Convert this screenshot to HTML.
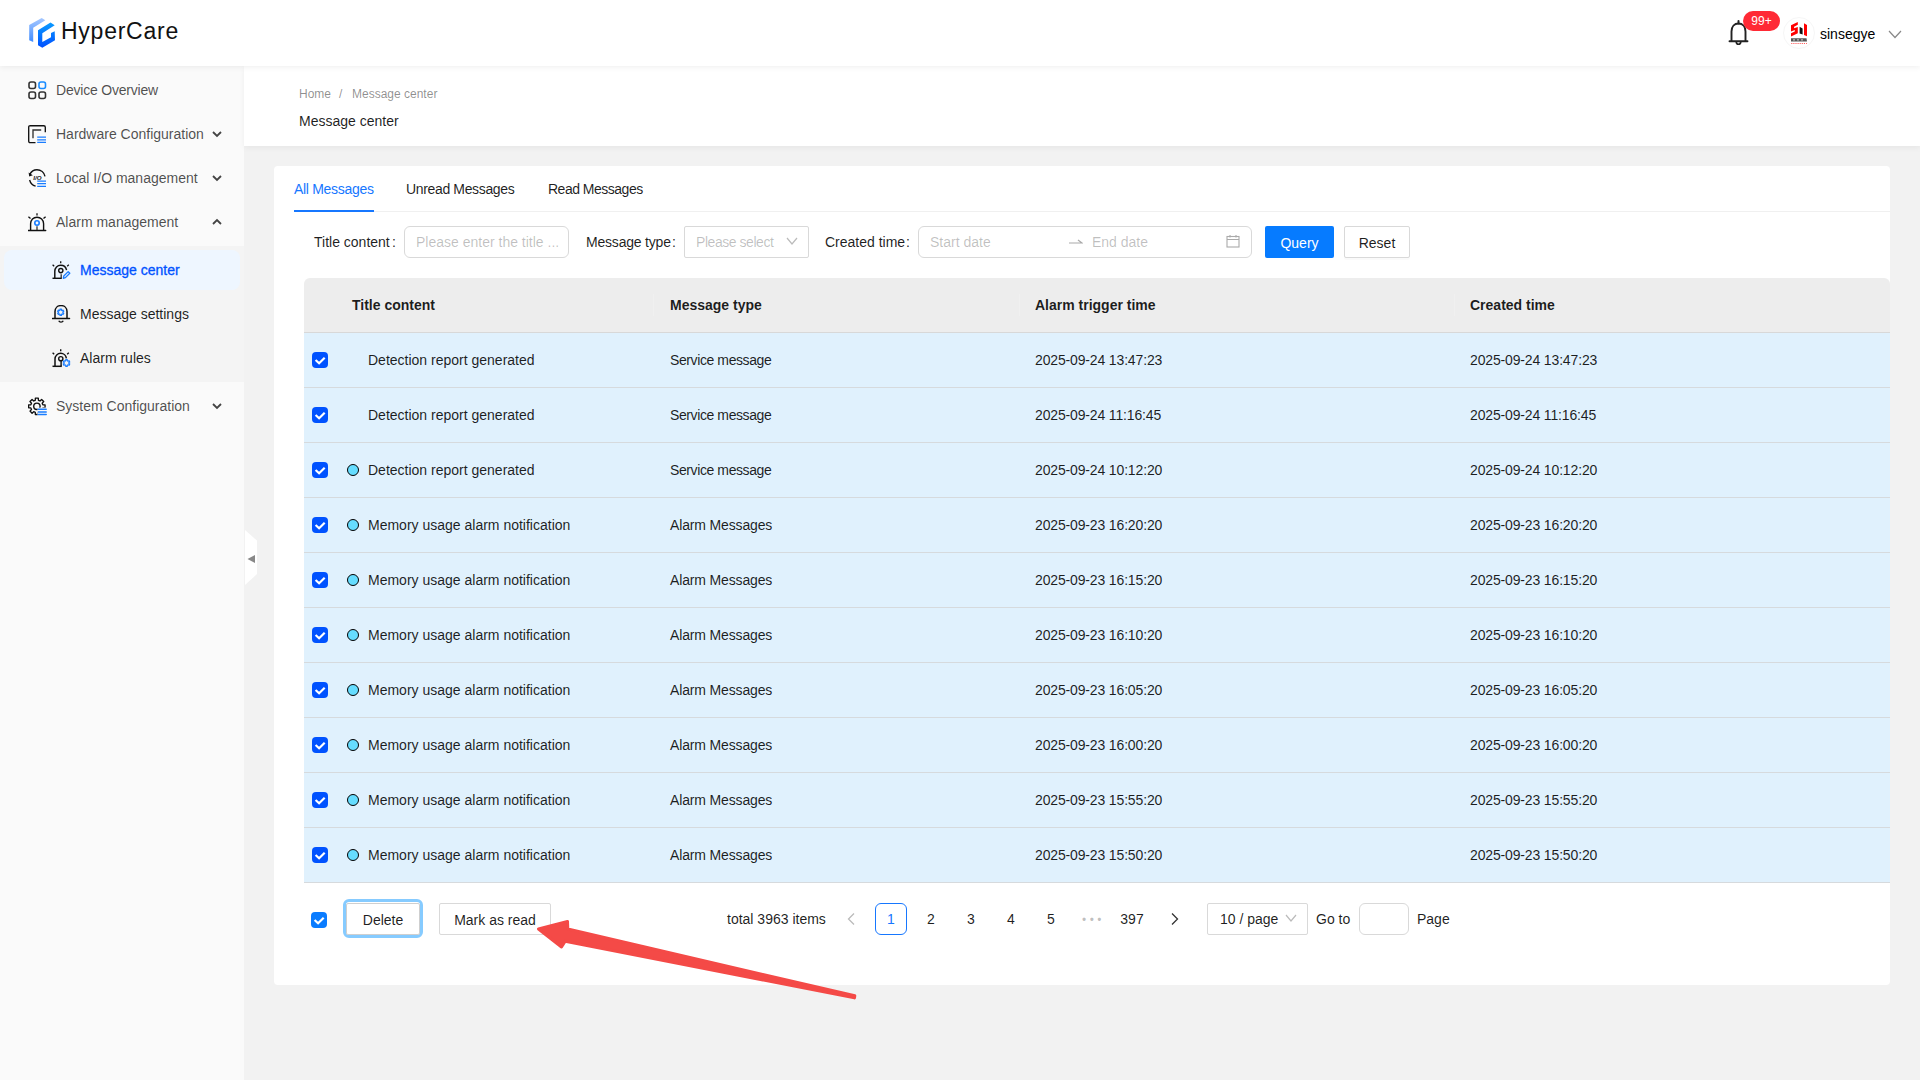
<!DOCTYPE html>
<html><head><meta charset="utf-8">
<style>
*{box-sizing:border-box;margin:0;padding:0}
html,body{width:1920px;height:1080px;overflow:hidden}
body{font-family:"Liberation Sans",sans-serif;font-size:14px;color:rgba(0,0,0,0.88);background:#f2f2f2;position:relative}
.abs{position:absolute}
.t{position:absolute;white-space:nowrap;line-height:22px;height:22px}
#hdr{left:0;top:0;width:1920px;height:66px;background:#fff;box-shadow:0 1px 6px rgba(0,0,0,0.07);z-index:5}
#side{left:0;top:66px;width:244px;height:1014px;background:#fafafa;z-index:1}
#sub{left:0;top:180px;width:244px;height:136px;background:#f4f4f4}
#selitem{left:4px;top:184px;width:236px;height:40px;background:#eef6ff;border-radius:8px}
.mi{color:rgba(0,0,0,0.7)}
.si{color:rgba(0,0,0,0.88)}
.chev{position:absolute;width:14px;height:14px}
#phdr{left:244px;top:66px;width:1676px;height:80px;background:#fff;box-shadow:0 2px 6px rgba(0,0,0,0.05);z-index:2}
#card{left:274px;top:166px;width:1616px;height:819px;background:#fff;border-radius:4px}
.inp{position:absolute;border:1px solid #d9d9d9;background:#fff}
.ph{color:rgba(0,0,0,0.25)}
#thead{left:30px;top:112px;width:1586px;height:55px;background:#ededed;border-radius:6px 6px 0 0;border-bottom:1px solid #d8d8d8}
.row{position:absolute;left:30px;width:1586px;height:55px;background:#e0f1fd;border-bottom:1px solid #d6dadd}
.cb{position:absolute;width:16px;height:16px;background:#0052ff;border-radius:4px}
.cb svg{position:absolute;left:0;top:0}
.dot{position:absolute;left:43px;top:21px;width:12px;height:12px;border-radius:50%;background:#66ddff;border:1px solid #000}
.sep{position:absolute;top:16px;width:1px;height:22px;background:#f0f0f0}
.pg{position:absolute;top:903px;height:32px;line-height:32px;text-align:center}
</style></head><body>

<!-- HEADER -->
<div id="hdr" class="abs">
  <svg class="abs" style="left:26px;top:14px" width="32" height="36" viewBox="0 0 32 36">
    <defs>
      <linearGradient id="lg1" x1="0" y1="0" x2="0" y2="1"><stop offset="0" stop-color="#a6c8ff"/><stop offset="1" stop-color="#3f8cff"/></linearGradient>
      <linearGradient id="lg2" x1="0" y1="0" x2="0" y2="1"><stop offset="0" stop-color="#0a9bff"/><stop offset="1" stop-color="#0050ff"/></linearGradient>
    </defs>
    <path d="M3.2 11 L15.7 4 L19.3 6.3 L7.2 13.7 L7.2 28 L3.2 26.3 Z" fill="url(#lg1)"/>
    <path d="M12 16.3 L24.5 8.5 L28.7 11.3 L16.3 19.3 L16.3 28 L25 23.3 L25 19 L28.7 17.3 L29 26.3 L16.3 33.7 L12 31.3 Z" fill="url(#lg2)"/>
  </svg>
  <div class="t" style="left:61px;top:16px;font-size:23px;line-height:30px;height:30px;color:#111;letter-spacing:0.75px">HyperCare</div>

  <!-- bell -->
  <svg class="abs" style="left:1728px;top:20px" width="22" height="27" viewBox="0 0 22 27">
    <path d="M10.5 1 L10.5 3.5" stroke="#222" stroke-width="2" stroke-linecap="round"/>
    <path d="M3.5 21 L3.5 11.5 C3.5 6.5 6.5 3.5 10.5 3.5 C14.5 3.5 17.5 6.5 17.5 11.5 L17.5 21" fill="none" stroke="#222" stroke-width="1.9"/>
    <path d="M1.5 21.3 L19.5 21.3" stroke="#222" stroke-width="1.9" stroke-linecap="round"/>
    <path d="M8.3 22 C8.3 25 12.7 25 12.7 22" fill="none" stroke="#222" stroke-width="1.7"/>
  </svg>
  <div class="abs" style="left:1743px;top:11px;width:37px;height:20px;border-radius:10px;background:#ff2a35;color:#fff;font-size:12px;line-height:20px;text-align:center">99+</div>
  <!-- avatar -->
  <div class="abs" style="left:1783px;top:17px;width:32px;height:32px;border-radius:50%;border:1px solid #f6f6f6;background:#fff"></div>
  <svg class="abs" style="left:1782px;top:16px" width="34" height="34" viewBox="0 0 34 34">
    <path d="M9 9.3 L15.8 6 L15.8 8.8 L12.1 10.7 L12.1 12.3 L15.8 11 L15.8 17.3 L9 20.5 L9 17.2 L12.8 15.6 L12.8 14.1 L9 15.4 Z" fill="#f00"/>
    <path d="M17.6 10.8 L20.6 12.4 L20.6 18.6 L17.6 17.4 Z" fill="#111"/>
    <path d="M22 7.3 L25 9 L25 20.2 L22 19 Z" fill="#f00"/>
    <path d="M9 22.3 L24.5 22.3 L25 25.5 L9 25.5 Z" fill="#555"/>
    <path d="M11 23.3 L13 23.3 L13 24.5 L11 24.5 Z M15 23.3 L17 23.3 L17 24.5 L15 24.5 Z M19 23.3 L21 23.3 L21 24.5 L19 24.5 Z" fill="#bbb"/>
    <path d="M9.3 27.5 L24.8 27.5" stroke="#f44" stroke-width="1" stroke-dasharray="1 1.1"/>
  </svg>
  <div class="t" style="left:1820px;top:23px;color:#000">sinsegye</div>
  <svg class="abs" style="left:1888px;top:29px" width="14" height="11" viewBox="0 0 14 11">
    <path d="M1 2 L7 8.5 L13 2" fill="none" stroke="#888" stroke-width="1.2"/>
  </svg>
</div>

<!-- SIDEBAR -->
<div id="side" class="abs">
  <div id="sub" class="abs"></div>
  <div id="selitem" class="abs"></div>

  <!-- Device Overview -->
  <svg class="abs" style="left:28px;top:15px" width="19" height="19" viewBox="0 0 19 19">
    <rect x="1" y="1" width="6.5" height="6.5" rx="2" fill="none" stroke="#333" stroke-width="1.6"/>
    <rect x="11" y="1" width="6.5" height="6.5" rx="2" fill="none" stroke="#1a8cff" stroke-width="1.6"/>
    <rect x="1" y="11" width="6.5" height="6.5" rx="2" fill="none" stroke="#333" stroke-width="1.6"/>
    <rect x="11" y="11" width="6.5" height="6.5" rx="2" fill="none" stroke="#333" stroke-width="1.6"/>
  </svg>
  <div class="t mi" style="left:56px;top:13px;letter-spacing:-0.2px">Device Overview</div>

  <!-- Hardware Configuration -->
  <svg class="abs" style="left:28px;top:59px" width="19" height="19" viewBox="0 0 19 19">
    <path d="M7.5 17.6 L2.3 17.6 C1.2 17.6 0.7 17 0.7 16 L0.7 2.2 C0.7 1.2 1.2 0.7 2.3 0.7 L15.8 0.7 C16.8 0.7 17.3 1.2 17.3 2.2 L17.3 7.3" fill="none" stroke="#111" stroke-width="1.35"/>
    <path d="M5 13.2 L5 5 L13.2 5" fill="none" stroke="#333" stroke-width="1.35"/>
    <path d="M9.2 12.2 L18 12.2 M9.2 14.8 L18 14.8 M9.2 17.4 L18 17.4" stroke="#1a7dff" stroke-width="1.25"/>
  </svg>
  <div class="t mi" style="left:56px;top:57px">Hardware Configuration</div>
  <svg class="chev" style="left:210px;top:61px" viewBox="0 0 14 14"><path d="M3 5 L7 9 L11 5" fill="none" stroke="#444" stroke-width="1.8"/></svg>

  <!-- Local I/O -->
  <svg class="abs" style="left:28px;top:103px" width="19" height="19" viewBox="0 0 19 19">
    <path d="M17 7.3 C16.2 3.3 12.8 0.7 9 0.7 C5.8 0.7 3.2 2.6 1.8 5.4" fill="none" stroke="#111" stroke-width="1.35"/>
    <path d="M0.6 3.6 L1.2 7.6 L4.8 6.2 Z" fill="#111"/>
    <path d="M1.6 11 C2.4 14 4.6 16.3 7.6 17.2" fill="none" stroke="#111" stroke-width="1.35"/>
    <text x="5.2" y="11.2" font-size="6.2" font-family="Liberation Sans" font-weight="bold" font-style="italic" fill="#111">I/O</text>
    <path d="M9.2 12.1 L18 12.1 M9.2 14.7 L18 14.7 M9.2 17.3 L18 17.3" stroke="#1a7dff" stroke-width="1.25"/>
  </svg>
  <div class="t mi" style="left:56px;top:101px">Local I/O management</div>
  <svg class="chev" style="left:210px;top:105px" viewBox="0 0 14 14"><path d="M3 5 L7 9 L11 5" fill="none" stroke="#444" stroke-width="1.8"/></svg>

  <!-- Alarm management -->
  <svg class="abs" style="left:28px;top:147px" width="19" height="19" viewBox="0 0 19 19">
    <path d="M9 0.3 L9 2.4 M0.4 3.7 L2.5 5.6 M17.6 3.7 L15.5 5.6" stroke="#111" stroke-width="1.3"/>
    <path d="M2.6 17.2 L2.6 10.8 C2.6 6.9 5.4 4.2 9 4.2 C12.6 4.2 15.6 6.9 15.6 10.8 L15.6 17.2" fill="none" stroke="#111" stroke-width="1.4"/>
    <path d="M0.3 17.5 L17.7 17.5" stroke="#111" stroke-width="1.4" stroke-linecap="round"/>
    <circle cx="9" cy="10" r="2.2" fill="none" stroke="#1a7dff" stroke-width="1.6"/>
    <path d="M9 13.2 L9 17" stroke="#333" stroke-width="1.3"/>
  </svg>
  <div class="t mi" style="left:56px;top:145px">Alarm management</div>
  <svg class="chev" style="left:210px;top:149px" viewBox="0 0 14 14"><path d="M3 9 L7 5 L11 9" fill="none" stroke="#444" stroke-width="1.8"/></svg>

  <!-- Message center (selected) -->
  <svg class="abs" style="left:52px;top:195px" width="19" height="19" viewBox="0 0 19 19">
    <path d="M8.7 0.3 L8.7 2.3 M0.6 3.8 L2.2 5.2 M16.8 3.8 L15.2 5.2" stroke="#111" stroke-width="1.3"/>
    <path d="M2.8 17.2 L2.8 10.3 C2.8 6.8 5.4 4.3 8.7 4.3 C11.6 4.3 14 6.5 14.6 9.2" fill="none" stroke="#111" stroke-width="1.45"/>
    <path d="M0.5 17.3 L9.8 17.3" stroke="#111" stroke-width="1.45"/>
    <circle cx="8.8" cy="9.6" r="2.1" fill="none" stroke="#111" stroke-width="1.4"/>
    <path d="M9.2 13.3 L9.2 17" stroke="#333" stroke-width="1.3"/>
    <path d="M11.3 17.3 L11.8 15 L16.2 10.6 L17.8 12.2 L13.4 16.6 Z" fill="none" stroke="#1a7dff" stroke-width="1.3" stroke-linejoin="round"/>
  </svg>
  <div class="t" style="left:80px;top:193px;color:#0052ff;-webkit-text-stroke:0.3px #0052ff">Message center</div>

  <!-- Message settings -->
  <svg class="abs" style="left:52px;top:239px" width="19" height="19" viewBox="0 0 19 19">
    <path d="M3 13.3 L3 6.5 C3 3 5.6 0.6 9 0.6 C12.4 0.6 15 3 15 6.5 L15 13.3" fill="none" stroke="#111" stroke-width="1.5"/>
    <path d="M0.5 13.6 L17.5 13.6" stroke="#111" stroke-width="1.5" stroke-linecap="round"/>
    <path d="M6.8 15.8 C7.5 17.6 10.5 17.6 11.2 15.8" fill="none" stroke="#111" stroke-width="1.4"/>
    <path d="M9.73 5.93 L9.75 4.89 L8.25 4.89 L8.27 5.93 L7.57 6.33 L6.68 5.80 L5.93 7.09 L6.84 7.60 L6.84 8.40 L5.93 8.91 L6.68 10.20 L7.57 9.67 L8.27 10.07 L8.25 11.11 L9.75 11.11 L9.73 10.07 L10.43 9.67 L11.32 10.20 L12.07 8.91 L11.16 8.40 L11.16 7.60 L12.07 7.09 L11.32 5.80 L10.43 6.33 Z" transform="translate(-0.3 -0.7)" fill="none" stroke="#1a7dff" stroke-width="1.2" stroke-linejoin="round"/>
  </svg>
  <div class="t si" style="left:80px;top:237px">Message settings</div>

  <!-- Alarm rules -->
  <svg class="abs" style="left:52px;top:283px" width="19" height="19" viewBox="0 0 19 19">
    <path d="M8.7 0.3 L8.7 2.3 M0.6 3.8 L2.2 5.2 M16.8 3.8 L15.2 5.2" stroke="#111" stroke-width="1.4"/>
    <path d="M3 17.2 L3 10 C3 6.8 5.6 4.3 8.7 4.3 C11.6 4.3 14 6.5 14.4 9.3" fill="none" stroke="#111" stroke-width="1.5"/>
    <path d="M0.5 17.3 L9.8 17.3" stroke="#111" stroke-width="1.5"/>
    <circle cx="8.8" cy="9.7" r="2.1" fill="none" stroke="#111" stroke-width="1.4"/>
    <path d="M9.1 12 L9.1 17" stroke="#111" stroke-width="1.4"/>
    <path d="M15.30 11.74 L15.29 10.69 L13.71 10.69 L13.70 11.74 L12.94 12.18 L12.03 11.66 L11.24 13.03 L12.14 13.56 L12.14 14.44 L11.24 14.97 L12.03 16.34 L12.94 15.82 L13.70 16.26 L13.71 17.31 L15.29 17.31 L15.30 16.26 L16.06 15.82 L16.97 16.34 L17.76 14.97 L16.86 14.44 L16.86 13.56 L17.76 13.03 L16.97 11.66 L16.06 12.18 Z" fill="none" stroke="#1a7dff" stroke-width="1.2" stroke-linejoin="round"/>
  </svg>
  <div class="t si" style="left:80px;top:281px">Alarm rules</div>

  <!-- System Configuration -->
  <svg class="abs" style="left:28px;top:331px" width="20" height="20" viewBox="0 0 20 20">
    <path d="M10.12 2.81 L10.01 0.53 L6.99 0.53 L6.88 2.81 L5.26 3.48 L3.58 1.94 L1.44 4.08 L2.98 5.76 L2.31 7.38 L0.03 7.49 L0.03 10.51 L2.31 10.62 L2.98 12.24 L1.44 13.92 L3.58 16.06 L5.26 14.52 L6.88 15.19 L6.99 17.47 L10.01 17.47 L10.12 15.19 L11.74 14.52 L13.42 16.06 L15.56 13.92 L14.02 12.24 L14.69 10.62 L16.97 10.51 L16.97 7.49 L14.69 7.38 L14.02 5.76 L15.56 4.08 L13.42 1.94 L11.74 3.48 Z" transform="translate(0.6 0.6) scale(0.97)" fill="none" stroke="#111" stroke-width="1.4" stroke-linejoin="round"/>
    <circle cx="8.9" cy="9.3" r="3.2" fill="none" stroke="#111" stroke-width="1.4"/>
    <rect x="9.6" y="10.6" width="10.4" height="9.4" fill="#fafafa"/>
    <path d="M10.3 12.3 L18.2 12.3 M10.3 14.9 L18.2 14.9 M10.3 17.6 L18.2 17.6" stroke="#1a7dff" stroke-width="1.5" stroke-linecap="round"/>
  </svg>
  <div class="t mi" style="left:56px;top:329px">System Configuration</div>
  <svg class="chev" style="left:210px;top:333px" viewBox="0 0 14 14"><path d="M3 5 L7 9 L11 5" fill="none" stroke="#444" stroke-width="1.8"/></svg>
</div>

<!-- collapse handle -->
<svg class="abs" style="left:245px;top:530px;z-index:3" width="13" height="56" viewBox="0 0 13 56">
  <path d="M0 0 L12 10.5 L12 44 L0 55 Z" fill="#fff"/>
  <path d="M2.5 29 L10 25 L10 33 Z" fill="#888"/>
</svg>

<!-- PAGE HEADER -->
<div id="phdr" class="abs">
  <div class="t" style="left:55px;top:17px;font-size:12px;color:rgba(0,0,0,0.45)">Home</div>
  <div class="t" style="left:95px;top:17px;font-size:12px;color:rgba(0,0,0,0.45)">/</div>
  <div class="t" style="left:108px;top:17px;font-size:12px;color:rgba(0,0,0,0.45)">Message center</div>
  <div class="t" style="left:55px;top:44px;font-size:14px;color:rgba(0,0,0,0.88)">Message center</div>
</div>

<!-- CARD -->
<div id="card" class="abs">
  <!-- tabs -->
  <div class="t" style="left:20px;top:12px;color:#1677ff;letter-spacing:-0.3px">All Messages</div>
  <div class="t" style="left:132px;top:12px;letter-spacing:-0.35px">Unread Messages</div>
  <div class="t" style="left:274px;top:12px;letter-spacing:-0.5px">Read Messages</div>
  <div class="abs" style="left:20px;top:45px;width:1596px;height:1px;background:#f0f0f0"></div>
  <div class="abs" style="left:20px;top:44px;width:80px;height:2px;background:#1677ff"></div>

  <!-- filters -->
  <div class="t" style="left:40px;top:65px">Title content</div><div class="t" style="left:118px;top:65px">:</div>
  <div class="inp" style="left:130px;top:60px;width:165px;height:32px;border-radius:6px"></div>
  <div class="t ph" style="left:142px;top:65px">Please enter the title ...</div>

  <div class="t" style="left:312px;top:65px;letter-spacing:-0.2px">Message type</div><div class="t" style="left:398px;top:65px">:</div>
  <div class="inp" style="left:410px;top:60px;width:125px;height:32px;border-radius:2px"></div>
  <div class="t ph" style="left:422px;top:65px;letter-spacing:-0.45px">Please select</div>
  <svg class="abs" style="left:512px;top:70px" width="12" height="10" viewBox="0 0 12 10"><path d="M1 2 L6 8 L11 2" fill="none" stroke="#bbb" stroke-width="1.2"/></svg>

  <div class="t" style="left:551px;top:65px">Created time</div><div class="t" style="left:632px;top:65px">:</div>
  <div class="inp" style="left:644px;top:60px;width:334px;height:32px;border-radius:6px"></div>
  <div class="t ph" style="left:656px;top:65px">Start date</div>
  <svg class="abs" style="left:795px;top:71px" width="14" height="10" viewBox="0 0 14 10"><path d="M0 6 L13 6 L9 3" fill="none" stroke="#aaa" stroke-width="1.2"/></svg>
  <div class="t ph" style="left:818px;top:65px">End date</div>
  <svg class="abs" style="left:952px;top:68px" width="14" height="14" viewBox="0 0 14 14">
    <rect x="1" y="2.5" width="12" height="10.5" fill="none" stroke="#aaa" stroke-width="1.1"/>
    <path d="M1 5.5 L13 5.5 M4 1 L4 3.5 M10 1 L10 3.5" stroke="#aaa" stroke-width="1.1"/>
  </svg>

  <div class="abs" style="left:991px;top:60px;width:69px;height:32px;background:#067bff;border-radius:2px;color:#fff;line-height:34px;text-align:center">Query</div>
  <div class="abs" style="left:1070px;top:60px;width:66px;height:32px;background:#fff;border:1px solid #d9d9d9;border-radius:2px;line-height:32px;text-align:center;box-shadow:0 2px 0 rgba(0,0,0,0.02)">Reset</div>

  <!-- table -->
  <div id="thead" class="abs">
    <div class="t" style="left:48px;top:16px;font-weight:bold">Title content</div>
    <div class="sep" style="left:349px"></div>
    <div class="t" style="left:366px;top:16px;font-weight:bold">Message type</div>
    <div class="sep" style="left:715px"></div>
    <div class="t" style="left:731px;top:16px;font-weight:bold">Alarm trigger time</div>
    <div class="sep" style="left:1150px"></div>
    <div class="t" style="left:1166px;top:16px;font-weight:bold">Created time</div>
  </div>
  <div class="row" style="top:167px"><div class="cb" style="left:8px;top:19px"><svg width="16" height="16" viewBox="0 0 16 16"><path d="M3.6 8 L7.1 11.3 L12.7 5.8" fill="none" stroke="#fff" stroke-width="2.2"/></svg></div><div class="t" style="left:64px;top:16px">Detection report generated</div><div class="t" style="left:366px;top:16px;letter-spacing:-0.4px">Service message</div><div class="t" style="left:731px;top:16px;letter-spacing:-0.15px">2025-09-24 13:47:23</div><div class="t" style="left:1166px;top:16px;letter-spacing:-0.15px">2025-09-24 13:47:23</div></div>
  <div class="row" style="top:222px"><div class="cb" style="left:8px;top:19px"><svg width="16" height="16" viewBox="0 0 16 16"><path d="M3.6 8 L7.1 11.3 L12.7 5.8" fill="none" stroke="#fff" stroke-width="2.2"/></svg></div><div class="t" style="left:64px;top:16px">Detection report generated</div><div class="t" style="left:366px;top:16px;letter-spacing:-0.4px">Service message</div><div class="t" style="left:731px;top:16px;letter-spacing:-0.15px">2025-09-24 11:16:45</div><div class="t" style="left:1166px;top:16px;letter-spacing:-0.15px">2025-09-24 11:16:45</div></div>
  <div class="row" style="top:277px"><div class="cb" style="left:8px;top:19px"><svg width="16" height="16" viewBox="0 0 16 16"><path d="M3.6 8 L7.1 11.3 L12.7 5.8" fill="none" stroke="#fff" stroke-width="2.2"/></svg></div><div class="dot"></div><div class="t" style="left:64px;top:16px">Detection report generated</div><div class="t" style="left:366px;top:16px;letter-spacing:-0.4px">Service message</div><div class="t" style="left:731px;top:16px;letter-spacing:-0.15px">2025-09-24 10:12:20</div><div class="t" style="left:1166px;top:16px;letter-spacing:-0.15px">2025-09-24 10:12:20</div></div>
  <div class="row" style="top:332px"><div class="cb" style="left:8px;top:19px"><svg width="16" height="16" viewBox="0 0 16 16"><path d="M3.6 8 L7.1 11.3 L12.7 5.8" fill="none" stroke="#fff" stroke-width="2.2"/></svg></div><div class="dot"></div><div class="t" style="left:64px;top:16px">Memory usage alarm notification</div><div class="t" style="left:366px;top:16px;letter-spacing:-0.15px">Alarm Messages</div><div class="t" style="left:731px;top:16px;letter-spacing:-0.15px">2025-09-23 16:20:20</div><div class="t" style="left:1166px;top:16px;letter-spacing:-0.15px">2025-09-23 16:20:20</div></div>
  <div class="row" style="top:387px"><div class="cb" style="left:8px;top:19px"><svg width="16" height="16" viewBox="0 0 16 16"><path d="M3.6 8 L7.1 11.3 L12.7 5.8" fill="none" stroke="#fff" stroke-width="2.2"/></svg></div><div class="dot"></div><div class="t" style="left:64px;top:16px">Memory usage alarm notification</div><div class="t" style="left:366px;top:16px;letter-spacing:-0.15px">Alarm Messages</div><div class="t" style="left:731px;top:16px;letter-spacing:-0.15px">2025-09-23 16:15:20</div><div class="t" style="left:1166px;top:16px;letter-spacing:-0.15px">2025-09-23 16:15:20</div></div>
  <div class="row" style="top:442px"><div class="cb" style="left:8px;top:19px"><svg width="16" height="16" viewBox="0 0 16 16"><path d="M3.6 8 L7.1 11.3 L12.7 5.8" fill="none" stroke="#fff" stroke-width="2.2"/></svg></div><div class="dot"></div><div class="t" style="left:64px;top:16px">Memory usage alarm notification</div><div class="t" style="left:366px;top:16px;letter-spacing:-0.15px">Alarm Messages</div><div class="t" style="left:731px;top:16px;letter-spacing:-0.15px">2025-09-23 16:10:20</div><div class="t" style="left:1166px;top:16px;letter-spacing:-0.15px">2025-09-23 16:10:20</div></div>
  <div class="row" style="top:497px"><div class="cb" style="left:8px;top:19px"><svg width="16" height="16" viewBox="0 0 16 16"><path d="M3.6 8 L7.1 11.3 L12.7 5.8" fill="none" stroke="#fff" stroke-width="2.2"/></svg></div><div class="dot"></div><div class="t" style="left:64px;top:16px">Memory usage alarm notification</div><div class="t" style="left:366px;top:16px;letter-spacing:-0.15px">Alarm Messages</div><div class="t" style="left:731px;top:16px;letter-spacing:-0.15px">2025-09-23 16:05:20</div><div class="t" style="left:1166px;top:16px;letter-spacing:-0.15px">2025-09-23 16:05:20</div></div>
  <div class="row" style="top:552px"><div class="cb" style="left:8px;top:19px"><svg width="16" height="16" viewBox="0 0 16 16"><path d="M3.6 8 L7.1 11.3 L12.7 5.8" fill="none" stroke="#fff" stroke-width="2.2"/></svg></div><div class="dot"></div><div class="t" style="left:64px;top:16px">Memory usage alarm notification</div><div class="t" style="left:366px;top:16px;letter-spacing:-0.15px">Alarm Messages</div><div class="t" style="left:731px;top:16px;letter-spacing:-0.15px">2025-09-23 16:00:20</div><div class="t" style="left:1166px;top:16px;letter-spacing:-0.15px">2025-09-23 16:00:20</div></div>
  <div class="row" style="top:607px"><div class="cb" style="left:8px;top:19px"><svg width="16" height="16" viewBox="0 0 16 16"><path d="M3.6 8 L7.1 11.3 L12.7 5.8" fill="none" stroke="#fff" stroke-width="2.2"/></svg></div><div class="dot"></div><div class="t" style="left:64px;top:16px">Memory usage alarm notification</div><div class="t" style="left:366px;top:16px;letter-spacing:-0.15px">Alarm Messages</div><div class="t" style="left:731px;top:16px;letter-spacing:-0.15px">2025-09-23 15:55:20</div><div class="t" style="left:1166px;top:16px;letter-spacing:-0.15px">2025-09-23 15:55:20</div></div>
  <div class="row" style="top:662px"><div class="cb" style="left:8px;top:19px"><svg width="16" height="16" viewBox="0 0 16 16"><path d="M3.6 8 L7.1 11.3 L12.7 5.8" fill="none" stroke="#fff" stroke-width="2.2"/></svg></div><div class="dot"></div><div class="t" style="left:64px;top:16px">Memory usage alarm notification</div><div class="t" style="left:366px;top:16px;letter-spacing:-0.15px">Alarm Messages</div><div class="t" style="left:731px;top:16px;letter-spacing:-0.15px">2025-09-23 15:50:20</div><div class="t" style="left:1166px;top:16px;letter-spacing:-0.15px">2025-09-23 15:50:20</div></div>

  <!-- footer -->
  <div class="cb" style="left:37px;top:746px;background:#0a7cff"><svg width="16" height="16" viewBox="0 0 16 16"><path d="M3.6 8 L7.1 11.3 L12.7 5.8" fill="none" stroke="#fff" stroke-width="2.2"/></svg></div>
  <div class="abs" style="left:69px;top:733px;width:80px;height:39px;border:3px solid #86cbff;border-radius:6px"></div>
  <div class="abs" style="left:72px;top:737px;width:74px;height:32px;border:1px solid #cfcfcf;border-radius:2px;line-height:32px;text-align:center;background:#fff">Delete</div>
  <div class="abs" style="left:165px;top:737px;width:112px;height:32px;border:1px solid #d9d9d9;border-radius:2px;line-height:32px;text-align:center;background:#fff">Mark as read</div>
</div>

<!-- pagination (page coords) -->
<div class="t" style="left:727px;top:908px">total 3963 items</div>
<svg class="abs" style="left:845px;top:912px" width="12" height="14" viewBox="0 0 12 14"><path d="M9 1.5 L3.5 7 L9 12.5" fill="none" stroke="#bbb" stroke-width="1.3"/></svg>
<div class="pg" style="left:875px;width:32px;border:1px solid #1677ff;border-radius:6px;line-height:30px;color:#1677ff">1</div>
<div class="pg" style="left:915px;width:32px">2</div>
<div class="pg" style="left:955px;width:32px">3</div>
<div class="pg" style="left:995px;width:32px">4</div>
<div class="pg" style="left:1035px;width:32px">5</div>
<div class="pg" style="left:1074px;top:904px;width:36px;color:rgba(0,0,0,0.25);letter-spacing:3.5px;text-indent:3px;font-size:12px">•••</div>
<div class="pg" style="left:1115px;width:34px">397</div>
<svg class="abs" style="left:1169px;top:912px" width="12" height="14" viewBox="0 0 12 14"><path d="M3 1.5 L8.5 7 L3 12.5" fill="none" stroke="#333" stroke-width="1.3"/></svg>
<div class="inp" style="left:1207px;top:903px;width:101px;height:32px;border-radius:2px"></div>
<div class="t" style="left:1220px;top:908px">10 / page</div>
<svg class="abs" style="left:1285px;top:913px" width="12" height="10" viewBox="0 0 12 10"><path d="M1 2 L6 8 L11 2" fill="none" stroke="#bbb" stroke-width="1.2"/></svg>
<div class="t" style="left:1316px;top:908px">Go to</div>
<div class="inp" style="left:1359px;top:903px;width:50px;height:32px;border-radius:6px"></div>
<div class="t" style="left:1417px;top:908px">Page</div>

<!-- red arrow annotation -->
<svg class="abs" style="left:0;top:0;z-index:10" width="1920" height="1080" viewBox="0 0 1920 1080">
  <path d="M538.5 929 L567.5 921.5 L567.8 929 L854.8 995.8 L854.5 997.9 L565.2 941.2 L561.5 947 Z" fill="#f44a47" stroke="#f44a47" stroke-width="3" stroke-linejoin="round"/>
</svg>
</body></html>
